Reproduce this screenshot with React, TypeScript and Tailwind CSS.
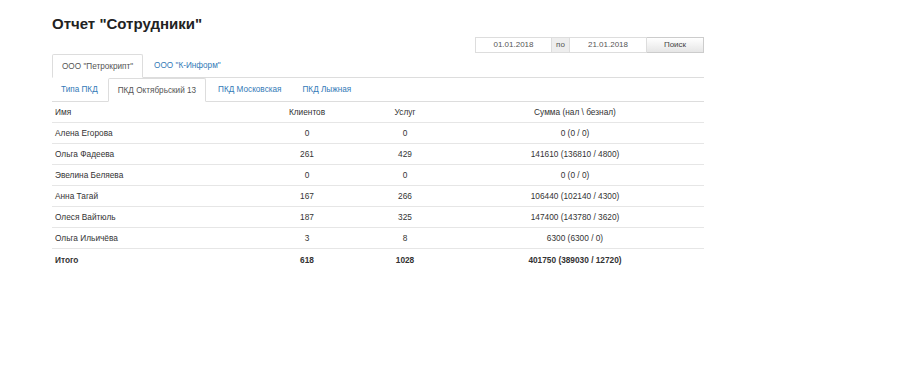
import React from "react";

const rows = [
  ["Алена Егорова", "0", "0", "0 (0 / 0)"],
  ["Ольга Фадеева", "261", "429", "141610 (136810 / 4800)"],
  ["Эвелина Беляева", "0", "0", "0 (0 / 0)"],
  ["Анна Тагай", "167", "266", "106440 (102140 / 4300)"],
  ["Олеся Вайтюль", "187", "325", "147400 (143780 / 3620)"],
  ["Ольга Ильичёва", "3", "8", "6300 (6300 / 0)"],
];

export default function App() {
  return (
    <div
      className="w-[900px] h-[389px] bg-white text-[#333] overflow-hidden"
      style={{ fontFamily: '"Liberation Sans", Arial, sans-serif' }}
    >
      <div className="ml-[52px] w-[652px] pt-[15px]">
        <h1 className="text-[15px] font-bold leading-[17px] text-[#222]">Отчет "Сотрудники"</h1>
        <div className="flex justify-end mt-[5px]">
          <div className="flex h-[16px] text-[8px] leading-[14px]">
            <div className="w-[77px] border border-[#ddd] text-center text-[#555]">01.01.2018</div>
            <div className="w-[17px] border-y border-[#ddd] bg-[#eee] text-center text-[#555]">по</div>
            <div className="w-[78px] border border-[#ddd] text-center text-[#555]">21.01.2018</div>
            <div className="w-[57px] border border-l-0 border-[#ccc] bg-gradient-to-b from-white to-[#e6e6e6] text-center text-[#444]">Поиск</div>
          </div>
        </div>
        <div className="flex h-[24px] mt-[1px] border-b border-[#ddd] text-[8.2px]">
          <div className="px-[9px] leading-[23px] border border-[#ddd] border-b-white bg-white -mb-px rounded-t-[2px] text-[#555]">ООО "Петрокрипт"</div>
          <div className="px-[9px] ml-[2px] leading-[23px] text-[#337ab7]">ООО "К-Информ"</div>
        </div>
        <div className="flex h-[24px] border-b border-[#ddd] text-[8.2px]">
          <div className="px-[9px] mr-[1px] leading-[23px] text-[#337ab7]">Типа ПКД</div>
          <div className="px-[9px] leading-[23px] border border-[#ddd] border-b-white bg-white -mb-px rounded-t-[2px] text-[#555]">ПКД Октябрьский 13</div>
          <div className="px-[11px] ml-[1px] leading-[23px] text-[#337ab7]">ПКД Московская</div>
          <div className="px-[10px] leading-[23px] text-[#337ab7]">ПКД Лыжная</div>
        </div>
        <div className="text-[8.3px]">
          <div className="grid grid-cols-[206px_98px_98px_1fr] h-[21px] items-center border-b border-[#e6e6e6] pr-[8px]">
            <div className="pl-[3px]">Имя</div>
            <div className="text-center">Клиентов</div>
            <div className="text-center">Услуг</div>
            <div className="text-center">Сумма (нал \ безнал)</div>
          </div>
          {rows.map((r) => (
            <div
              key={r[0]}
              className="grid grid-cols-[206px_98px_98px_1fr] h-[21px] items-center border-b border-[#e6e6e6] pr-[8px]"
            >
              <div className="pl-[3px]">{r[0]}</div>
              <div className="text-center">{r[1]}</div>
              <div className="text-center">{r[2]}</div>
              <div className="text-center">{r[3]}</div>
            </div>
          ))}
          <div className="grid grid-cols-[206px_98px_98px_1fr] h-[22px] items-center font-bold pr-[8px]">
            <div className="pl-[3px]">Итого</div>
            <div className="text-center">618</div>
            <div className="text-center">1028</div>
            <div className="text-center">401750 (389030 / 12720)</div>
          </div>
        </div>
      </div>
    </div>
  );
}
